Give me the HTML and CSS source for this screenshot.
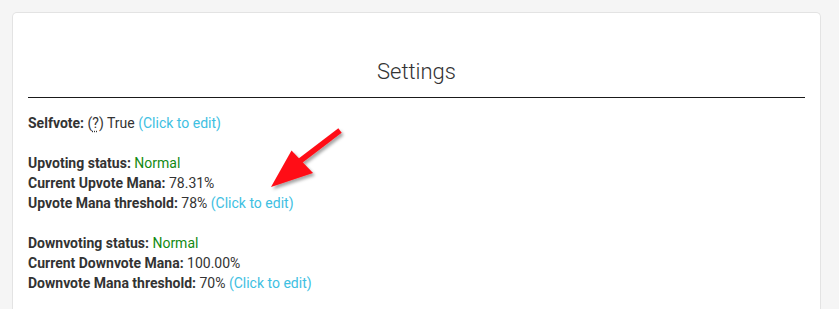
FILE: index.html
```html
<!DOCTYPE html>
<html>
<head>
<meta charset="utf-8">
<link rel="stylesheet" href="styles.css">
</head>
<body>
<div class="card">
  <h2 class="title">Settings</h2>
  <hr class="rule">
  <div class="info">
    <b>Selfvote:</b> (<abbr title="help">?</abbr>) True <a class="edit">(Click to edit)</a><br>
    <br>
    <b>Upvoting status:</b> <span class="ok">Normal</span><br>
    <b>Current Upvote Mana:</b> 78.31%<br>
    <b>Upvote Mana threshold:</b> 78% <a class="edit">(Click to edit)</a><br>
    <br>
    <b>Downvoting status:</b> <span class="ok">Normal</span><br>
    <b>Current Downvote Mana:</b> 100.00%<br>
    <b>Downvote Mana threshold:</b> 70% <a class="edit">(Click to edit)</a>
  </div>
</div>
<svg class="arrow" width="839" height="309" viewBox="0 0 839 309">
  <defs>
    <filter id="sh" x="-20%" y="-20%" width="150%" height="150%">
      <feDropShadow dx="2" dy="2.5" stdDeviation="1.6" flood-color="#000" flood-opacity="0.35"/>
    </filter>
  </defs>
  <g filter="url(#sh)">
    <line x1="340" y1="130.5" x2="300" y2="161" stroke="#ff0a14" stroke-width="5.5"/>
    <polygon points="271,187 291.5,150.5 313,173" fill="#ff0a14"/>
  </g>
</svg>
</body>
</html>
```
FILE: styles.css
```css
html, body {
  margin: 0;
  padding: 0;
}
body {
  background: #f5f5f5;
  font-family: Roboto, "Liberation Sans", Arial, sans-serif;
  color: #333;
  height: 309px;
  overflow: hidden;
  position: relative;
}
.card {
  margin: 12px 0 0 12px;
  width: 809px;
  height: 297px;
  box-sizing: border-box;
  background: #fff;
  border: 1px solid #e3e3e3;
  border-bottom: 0;
  border-radius: 5px 5px 0 0;
  padding: 44px 15px 0 15px;
}
.title {
  margin: 0;
  font-weight: 300;
  font-size: 22px;
  line-height: 30px;
  text-align: center;
  color: #333;
}
.rule {
  margin: 10px 0 0 0;
  border: 0;
  border-top: 1px solid #1a1a1a;
  height: 0;
}
.info {
  margin-top: 15px;
  font-size: 14px;
  line-height: 20px;
}
.info b {
  font-weight: 700;
}
abbr {
  text-decoration: underline dotted;
  text-underline-offset: 3px;
}
.edit {
  color: #3ec0e2;
  text-decoration: none;
}
.ok {
  color: #138a13;
}
.arrow {
  position: absolute;
  left: 0;
  top: 0;
  pointer-events: none;
}
```
